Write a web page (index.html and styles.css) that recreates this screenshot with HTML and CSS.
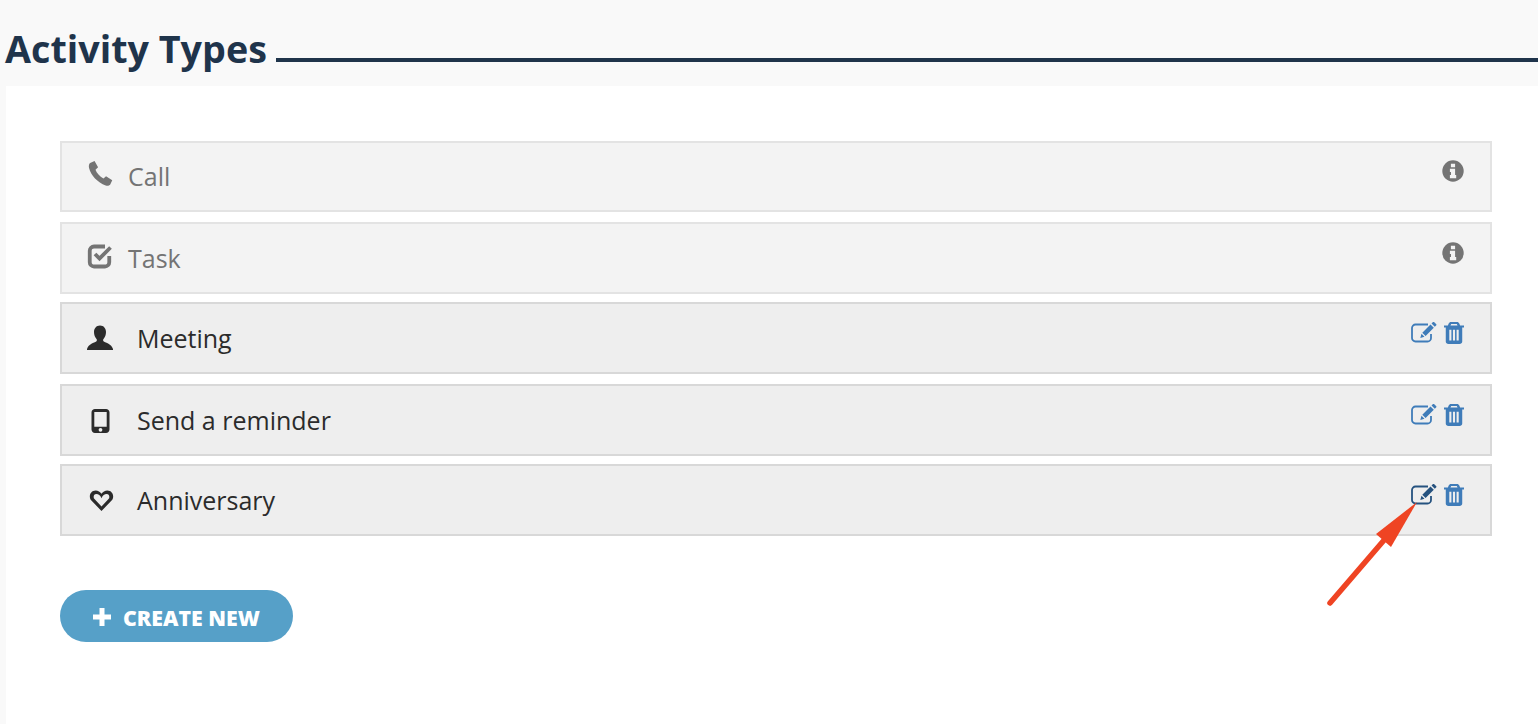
FILE: index.html
```html
<!DOCTYPE html>
<html lang="en">
<head>
    <meta charset="UTF-8">
    <title>Activity Types</title>
    <link rel="stylesheet" href="styles.css">
</head>
<body>
    <header class="page-header">
        <h1>Activity Types</h1>
        <span class="title-rule"></span>
    </header>

    <main class="panel">
        <ul class="type-list">
            <li class="type-row is-system">
                <span class="type-icon">
                    <svg viewBox="0.95 0 22.2 22.2" width="26" height="26"><path d="M3.600 2.600 7.400.8l3 5.400-2.200 2.200c1 2.600 3.600 5.800 6.800 7.400l2.200-1.900 5.300 3.400-1.600 3.400c-.6 1.200-2.400 1.600-4 1C10 19.300 4.300 13 2.700 6.800c-.4-1.800 0-3.400.9-4.200z"/></svg>
                </span>
                <span class="type-name">Call</span>
                <span class="row-actions">
                    <svg class="info-icon" viewBox="0 0 22 22" width="22" height="22"><circle cx="11" cy="11" r="10.700"/><path class="cut" d="M8.900 3.800h4.200v3.400H8.900zM7.900 8.800h5.200v6.200h1.100v3.200H7.900V15H9V12H7.900z"/></svg>
                </span>
            </li>
            <li class="type-row is-system">
                <span class="type-icon">
                    <svg class="check-icon" viewBox="0 0 26 26" width="26" height="26"><path d="M18 4.500H7a4.250 4.250 0 0 0-4.250 4.250v11.500a4.250 4.250 0 0 0 4.250 4.250h11a4.250 4.250 0 0 0 4.250-4.250V14"/><path d="M8 12l4.500 4.500L23.500 5.500"/></svg>
                </span>
                <span class="type-name">Task</span>
                <span class="row-actions">
                    <svg class="info-icon" viewBox="0 0 22 22" width="22" height="22"><circle cx="11" cy="11" r="10.700"/><path class="cut" d="M8.900 3.800h4.200v3.400H8.900zM7.900 8.800h5.200v6.200h1.100v3.200H7.900V15H9V12H7.900z"/></svg>
                </span>
            </li>
            <li class="type-row gap-small">
                <span class="type-icon">
                    <svg viewBox="0 0 26 26" width="26" height="26"><path d="M13 .5c3.700 0 6 2.900 6 6.600 0 2.800-1 5.300-2.500 6.900-.6.700-.5 2 .3 2.500 2 1.200 7.600 2.300 9.200 7.500v1H0v-1c1.600-5.200 7.200-6.300 9.200-7.500.8-.5.900-1.800.3-2.500C8 12.400 7 9.900 7 7.100 7 3.400 9.300.5 13 .5z"/></svg>
                </span>
                <span class="type-name wide">Meeting</span>
                <span class="row-actions">
                    <svg class="edit-icon" viewBox="0 0 26 22" width="26" height="22"><path class="box" d="M17 2.500H4.500a3.500 3.500 0 0 0-3.500 3.500v10a3.500 3.500 0 0 0 3.500 3.500h12a3.500 3.500 0 0 0 3.500-3.500v-4"/><path d="M11.300 10.700 19.500 2.500l3.300 3.300-8.200 8.200zM10.500 11.800l3 3-4.200 1.200zM20.500 1.500 22 0c.4-.2.700-.2 1 0l2.300 2.300c.2.300.2.700 0 1l-1.500 1.500z"/></svg>
                    <svg class="trash-icon" viewBox="0.5 0.5 17 21.500" width="20" height="22" preserveAspectRatio="none"><path fill-rule="evenodd" d="M6.500.5h5c1 0 1.700.6 2 1.500l.7 2h3.300v1.800H16v13.700c0 1.400-1 2.500-2.300 2.500H4.300C3 22 2 20.900 2 19.500V5.800H.5V4h3.300l.7-2c.3-.9 1-1.500 2-1.500zM6 4h6l-.6-1.500H6.600zM5 8v10.500h1.800V8zm3.100 0v10.500h1.800V8zm3.100 0v10.500H13V8z"/></svg>
                </span>
            </li>
            <li class="type-row">
                <span class="type-icon">
                    <svg viewBox="-0.5 -1 26 26" width="26" height="26"><path fill-rule="evenodd" d="M7.500 1h11C20.400 1 22 2.500 22 4.400v17.200c0 1.900-1.600 3.400-3.500 3.400h-11C5.600 25 4 23.500 4 21.600V4.400C4 2.500 5.600 1 7.500 1zM6.800 4v14.800h12.400V4zM13 19.900a1.900 1.900 0 1 0 0 3.800 1.900 1.900 0 0 0 0-3.800z"/></svg>
                </span>
                <span class="type-name wide">Send a reminder</span>
                <span class="row-actions">
                    <svg class="edit-icon" viewBox="0 0 26 22" width="26" height="22"><path class="box" d="M17 2.500H4.500a3.500 3.500 0 0 0-3.500 3.500v10a3.500 3.500 0 0 0 3.500 3.500h12a3.500 3.500 0 0 0 3.500-3.500v-4"/><path d="M11.300 10.700 19.500 2.500l3.300 3.300-8.200 8.200zM10.500 11.800l3 3-4.200 1.200zM20.500 1.500 22 0c.4-.2.700-.2 1 0l2.300 2.300c.2.300.2.700 0 1l-1.500 1.500z"/></svg>
                    <svg class="trash-icon" viewBox="0.5 0.5 17 21.500" width="20" height="22" preserveAspectRatio="none"><path fill-rule="evenodd" d="M6.500.5h5c1 0 1.700.6 2 1.500l.7 2h3.300v1.800H16v13.700c0 1.400-1 2.500-2.300 2.500H4.300C3 22 2 20.900 2 19.500V5.800H.5V4h3.300l.7-2c.3-.9 1-1.500 2-1.500zM6 4h6l-.6-1.500H6.600zM5 8v10.500h1.800V8zm3.100 0v10.500h1.800V8zm3.100 0v10.500H13V8z"/></svg>
                </span>
            </li>
            <li class="type-row gap-small">
                <span class="type-icon">
                    <svg viewBox="-1.5 0 26 26" width="26" height="26"><path fill-rule="evenodd" d="M13 24 2.900 13.600C-.3 10.300 1.500 3.500 7.200 3.500c2.400 0 4.500 1.300 5.800 3.300 1.300-2 3.400-3.300 5.800-3.300 5.700 0 7.500 6.800 4.300 10.100zm0-4.600 7-7.300c1.700-1.900.7-5-1.800-5-2.200 0-4 1.500-5.200 4.100C11.800 8.600 10 7.100 7.800 7.100c-2.500 0-3.500 3.100-1.800 5z"/></svg>
                </span>
                <span class="type-name wide">Anniversary</span>
                <span class="row-actions">
                    <svg class="edit-icon is-hover" viewBox="0 0 26 22" width="26" height="22"><path class="box" d="M17 2.500H4.500a3.500 3.500 0 0 0-3.500 3.500v10a3.500 3.500 0 0 0 3.500 3.500h12a3.500 3.500 0 0 0 3.500-3.500v-4"/><path d="M11.300 10.700 19.500 2.500l3.300 3.300-8.200 8.200zM10.500 11.800l3 3-4.200 1.200zM20.500 1.500 22 0c.4-.2.700-.2 1 0l2.300 2.300c.2.300.2.700 0 1l-1.500 1.500z"/></svg>
                    <svg class="trash-icon" viewBox="0.5 0.5 17 21.500" width="20" height="22" preserveAspectRatio="none"><path fill-rule="evenodd" d="M6.500.5h5c1 0 1.700.6 2 1.500l.7 2h3.300v1.800H16v13.700c0 1.400-1 2.500-2.300 2.500H4.300C3 22 2 20.900 2 19.500V5.800H.5V4h3.300l.7-2c.3-.9 1-1.500 2-1.500zM6 4h6l-.6-1.500H6.600zM5 8v10.500h1.800V8zm3.100 0v10.500h1.800V8zm3.100 0v10.500H13V8z"/></svg>
                </span>
            </li>
        </ul>

        <button class="create-btn" type="button">
            <svg viewBox="0 0 20 20" width="20" height="20"><path d="M7.500 1h5v6.500H19v5h-6.500V19h-5v-6.500H1v-5h6.500z"/></svg>
            CREATE NEW
        </button>
    </main>

    <!-- annotation drawn over the screenshot -->
    <svg class="arrow-note" viewBox="0 0 110 120" width="110" height="120">
        <path d="M7 108 62 44" stroke="#ef4423" stroke-width="5.5" stroke-linecap="round" fill="none"/>
        <path d="M94 7 53 39 68 52z" fill="#ef4423"/>
    </svg>
</body>
</html>
```

FILE: styles.css
```css
body {
    margin: 0;
    height: 724px;
    overflow: hidden;
    background-color: #f9f9f9;
    font-family: 'Open Sans', sans-serif;
    position: relative;
}

.page-header {
    display: flex;
    align-items: flex-start;
    gap: 9px;
    height: 86px;
    padding-left: 5px;
}

.page-header h1 {
    margin: 23px 0 0;
    font-size: 37.7px;
    line-height: 51px;
    font-weight: 700;
    color: #1f344b;
    white-space: nowrap;
}

.title-rule {
    flex: 1;
    height: 4px;
    margin-top: 58px;
    background-color: #1f344b;
}

.panel {
    box-sizing: border-box;
    margin-left: 6px;
    height: 638px;
    padding: 55px 46px 0 54px;
    background-color: #ffffff;
}

.type-list {
    list-style: none;
    margin: 0;
    padding: 0;
}

.type-row {
    display: flex;
    align-items: flex-start;
    box-sizing: border-box;
    height: 72px;
    margin-top: 10px;
    padding: 15px 26px 0 25px;
    background-color: #eeeeee;
    border: 2px solid #d8d8d8;
    color: #2b2b2b;
}

.type-row:first-child {
    margin-top: 0;
    height: 71px;
    padding-top: 14px;
}

.type-row.gap-small {
    margin-top: 8px;
}

.type-row.is-system {
    background-color: #f3f3f3;
    border-color: #e3e3e3;
    color: #747474;
}

.type-icon {
    width: 26px;
    height: 26px;
    flex: none;
    margin-top: 6px;
}

.is-system .type-icon {
    margin-top: 3px;
}

.type-icon svg {
    display: block;
    fill: currentColor;
    overflow: visible;
}

.type-icon .check-icon {
    fill: none;
    stroke: currentColor;
    stroke-width: 3.8px;
}

.type-name {
    margin-left: 15px;
    margin-top: 3px;
    font-size: 25px;
    line-height: 33px;
}

.type-name.wide {
    margin-left: 24px;
}

.row-actions {
    margin-left: auto;
    margin-top: 3px;
    display: flex;
    align-items: flex-start;
    gap: 7px;
}

.info-icon {
    fill: #747474;
}

.info-icon .cut {
    fill: #f3f3f3;
}

.edit-icon,
.trash-icon {
    fill: #3f7cb9;
}

.edit-icon .box {
    fill: none;
    stroke: #3f7cb9;
    stroke-width: 1.8px;
}

.edit-icon.is-hover {
    fill: #25527f;
}

.edit-icon.is-hover .box {
    stroke: #25527f;
}

.create-btn {
    display: flex;
    align-items: center;
    gap: 11px;
    height: 52px;
    margin-top: 54px;
    padding: 2px 33px 0 32px;
    border: none;
    border-radius: 26px;
    background-color: #56a0c8;
    color: #ffffff;
    font-family: 'Open Sans', sans-serif;
    font-size: 21.3px;
    font-weight: 800;
}

.create-btn svg {
    fill: #ffffff;
    flex: none;
}

.arrow-note {
    position: absolute;
    left: 1323px;
    top: 495px;
}
```
